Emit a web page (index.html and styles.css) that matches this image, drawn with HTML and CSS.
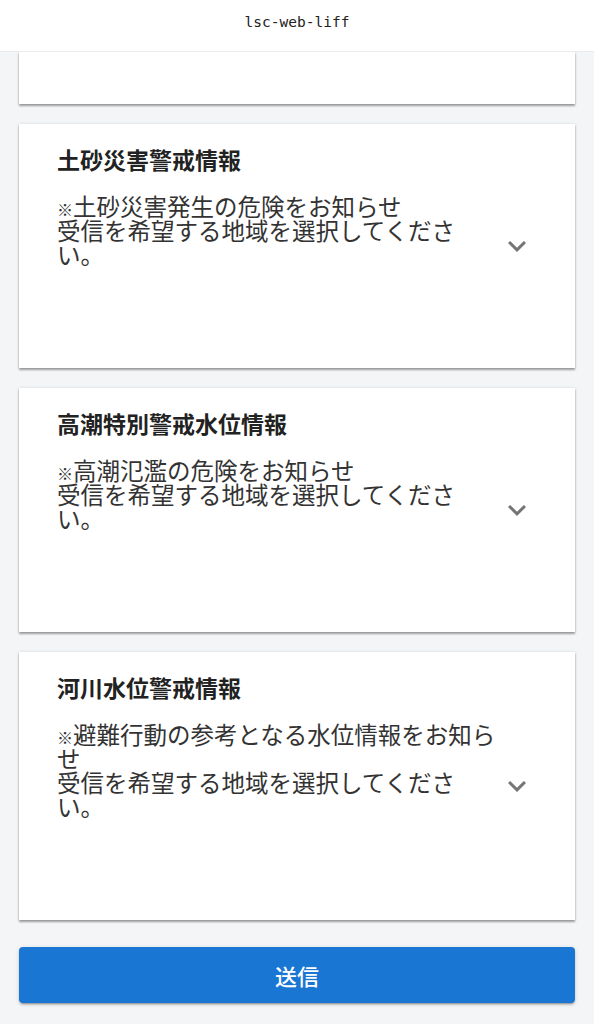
FILE: index.html
```html
<!DOCTYPE html>
<html lang="ja">

<head>
    <meta charset="UTF-8" />
    <meta name="viewport" content="width=device-width, initial-scale=1.0" />
    <title>lsc-web-liff</title>
    <link rel="stylesheet" href="styles.css">
</head>

<body>

    <div class="header">lsc-web-liff</div>

    <div class="content">
        <div class="card card-cut"></div>

        <div class="card">
            <h2 class="card-title">土砂災害警戒情報</h2>
            <div class="select-row">
                <div class="select-text"><span class="mark">※</span>土砂災害発生の危険をお知らせ<br>受信を希望する地域を選択してください。</div>
                <svg class="chevron" viewBox="0 0 24 24"><path d="M16.59 8.59 12 13.17 7.41 8.59 6 10l6 6 6-6z"/></svg>
            </div>
        </div>

        <div class="card">
            <h2 class="card-title">高潮特別警戒水位情報</h2>
            <div class="select-row">
                <div class="select-text"><span class="mark">※</span>高潮氾濫の危険をお知らせ<br>受信を希望する地域を選択してください。</div>
                <svg class="chevron" viewBox="0 0 24 24"><path d="M16.59 8.59 12 13.17 7.41 8.59 6 10l6 6 6-6z"/></svg>
            </div>
        </div>

        <div class="card">
            <h2 class="card-title">河川水位警戒情報</h2>
            <div class="select-row">
                <div class="select-text"><span class="mark">※</span>避難行動の参考となる水位情報をお知らせ<br>受信を希望する地域を選択してください。</div>
                <svg class="chevron" viewBox="0 0 24 24"><path d="M16.59 8.59 12 13.17 7.41 8.59 6 10l6 6 6-6z"/></svg>
            </div>
        </div>

        <button class="submit-btn">送信</button>
    </div>

</body>

</html>
```

FILE: styles.css
```css
body {
    margin: 0;
    font-family: "Noto Sans CJK JP", "Noto Sans", sans-serif;
    background-color: #f4f5f7;
    color: #333;
}

.header {
    background: #fff;
    border-bottom: 1px solid #ebebeb;
    padding: 12px 0 19px;
    line-height: 20px;
    text-align: center;
    font-family: "DejaVu Sans Mono", monospace;
    font-size: 14.5px;
    color: #222;
    position: relative;
    z-index: 2;
}

.content {
    display: flex;
    flex-direction: column;
    gap: 20px;
    padding: 0 19px 21px;
}

.card {
    background: #fff;
    box-shadow: 0 2px 2px rgba(0, 0, 0, 0.35), 0 0 3px rgba(0, 0, 0, 0.12);
    padding: 21px 40px 102px 38px;
}

.card-cut {
    height: 52px;
    padding: 0;
}

.card-title {
    margin: 0 0 21px;
    font-size: 23px;
    line-height: 28px;
    font-weight: 700;
    color: #222;
}

.select-row {
    display: flex;
    align-items: center;
}

.select-text {
    flex: 1;
    font-size: 23.5px;
    line-height: 24px;
    color: #333;
}

.mark {
    font-size: 16px;
    line-height: 16px;
}

.chevron {
    width: 36px;
    height: 36px;
    margin-top: 32px;
    fill: #757575;
    flex-shrink: 0;
}

.submit-btn {
    margin-top: 7px;
    height: 56px;
    border: none;
    border-radius: 4px;
    background: #1976d2;
    color: #fff;
    font-family: inherit;
    font-size: 22px;
    font-weight: 500;
    box-shadow: 0 3px 1px -2px rgba(0, 0, 0, 0.2), 0 2px 2px rgba(0, 0, 0, 0.14), 0 1px 5px rgba(0, 0, 0, 0.12);
}
```
